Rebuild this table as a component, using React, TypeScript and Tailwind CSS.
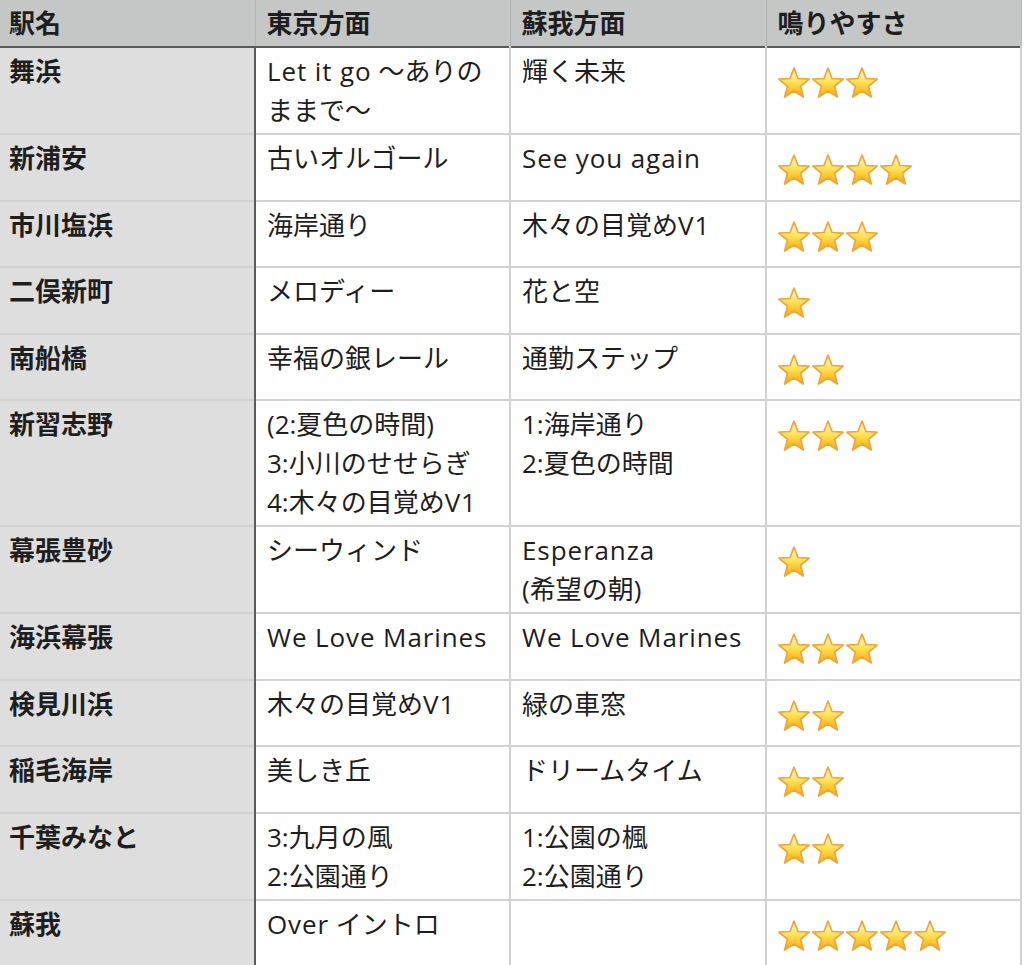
import React from "react";

type Row = { name: string; tokyo: string[]; soga: string[]; stars: number };

const rows: Row[] = [
  { name: "舞浜", tokyo: ["Let it go ～ありの", "ままで～"], soga: ["輝く未来"], stars: 3 },
  { name: "新浦安", tokyo: ["古いオルゴール"], soga: ["See you again"], stars: 4 },
  { name: "市川塩浜", tokyo: ["海岸通り"], soga: ["木々の目覚めV1"], stars: 3 },
  { name: "二俣新町", tokyo: ["メロディー"], soga: ["花と空"], stars: 1 },
  { name: "南船橋", tokyo: ["幸福の銀レール"], soga: ["通勤ステップ"], stars: 2 },
  {
    name: "新習志野",
    tokyo: ["(2:夏色の時間)", "3:小川のせせらぎ", "4:木々の目覚めV1"],
    soga: ["1:海岸通り", "2:夏色の時間"],
    stars: 3,
  },
  { name: "幕張豊砂", tokyo: ["シーウィンド"], soga: ["Esperanza", "(希望の朝)"], stars: 1 },
  { name: "海浜幕張", tokyo: ["We Love Marines"], soga: ["We Love Marines"], stars: 3 },
  { name: "検見川浜", tokyo: ["木々の目覚めV1"], soga: ["緑の車窓"], stars: 2 },
  { name: "稲毛海岸", tokyo: ["美しき丘"], soga: ["ドリームタイム"], stars: 2 },
  { name: "千葉みなと", tokyo: ["3:九月の風", "2:公園通り"], soga: ["1:公園の楓", "2:公園通り"], stars: 2 },
  { name: "蘇我", tokyo: ["Over イントロ"], soga: [], stars: 5 },
];

function Star() {
  return (
    <svg width="34" height="33" viewBox="0 0 32 31" className="shrink-0">
      <defs>
        <linearGradient id="starFill" x1="0" y1="0" x2="0" y2="1">
          <stop offset="0" stopColor="#fffce0" />
          <stop offset="0.45" stopColor="#ffe45c" />
          <stop offset="1" stopColor="#f7a800" />
        </linearGradient>
      </defs>
      <path
        d="M16 2 L19.82 11.74 L30.27 12.36 L22.18 19.01 L24.82 29.14 L16 23.5 L7.18 29.14 L9.82 19.01 L1.73 12.36 L12.18 11.74 Z"
        fill="url(#starFill)"
        stroke="#f0a63a"
        strokeWidth="1.6"
        strokeLinejoin="round"
      />
    </svg>
  );
}

// latin runs get a bit of tracking so they come out as wide as the screenshot's font
function Text({ text }: { text: string }) {
  const parts = text.split(/([A-Za-z][A-Za-z ]*[A-Za-z]|[A-Za-z])/);
  return (
    <>
      {parts.map((p, i) =>
        /^[A-Za-z]/.test(p) ? (
          <span key={i} className="tracking-[0.9px]">
            {p}
          </span>
        ) : (
          <React.Fragment key={i}>{p}</React.Fragment>
        )
      )}
    </>
  );
}

function Lines({ items }: { items: string[] }) {
  return (
    <>
      {items.map((t, i) => (
        <div key={i} className="whitespace-nowrap">
          <Text text={t} />
        </div>
      ))}
    </>
  );
}

export default function App() {
  return (
    <div
      className="bg-white min-h-[965px] text-[#1e1e1e]"
      style={{ fontFamily: '"Open Sans", "Noto Sans CJK JP", sans-serif' }}
    >
      <table className="border-collapse table-fixed w-[1021px] text-[26px] leading-[39px]">
        <colgroup>
          <col className="w-[255px]" />
          <col className="w-[255px]" />
          <col className="w-[256px]" />
          <col className="w-[255px]" />
        </colgroup>
        <thead>
          <tr className="bg-[#c5c7c7] h-[47px] border-b-2 border-[#5a5a5a]">
            <th className="text-left font-bold pl-[9px] border-r border-[#b3b5b5]">駅名</th>
            <th className="text-left font-bold pl-[11px] border-r border-[#b3b5b5]">東京方面</th>
            <th className="text-left font-bold pl-[11px] border-r border-[#b3b5b5]">蘇我方面</th>
            <th className="text-left font-bold pl-[11px] border-r border-[#b3b5b5]">鳴りやすさ</th>
          </tr>
        </thead>
        <tbody>
          {rows.map((r) => (
            <tr key={r.name} className="border-b-2 border-[#d2d2d2] last:border-b-0">
              <td className="align-top bg-[#dedede] font-bold pl-[9px] pt-[4px] pb-[3px] border-r-2 border-r-[#5a5a5a]">
                {r.name}
              </td>
              <td className="align-top pl-[11px] pt-[4px] pb-[3px] border-r-2 border-r-[#d2d2d2]">
                <Lines items={r.tokyo} />
              </td>
              <td className="align-top pl-[11px] pt-[4px] pb-[3px] border-r-2 border-r-[#d2d2d2]">
                <Lines items={r.soga} />
              </td>
              <td className="align-top pl-[10px] pt-[18px] pb-[13.5px] border-r-2 border-r-[#d2d2d2]">
                <div className="flex">
                  {Array.from({ length: r.stars }).map((_, i) => (
                    <Star key={i} />
                  ))}
                </div>
              </td>
            </tr>
          ))}
        </tbody>
      </table>
    </div>
  );
}
